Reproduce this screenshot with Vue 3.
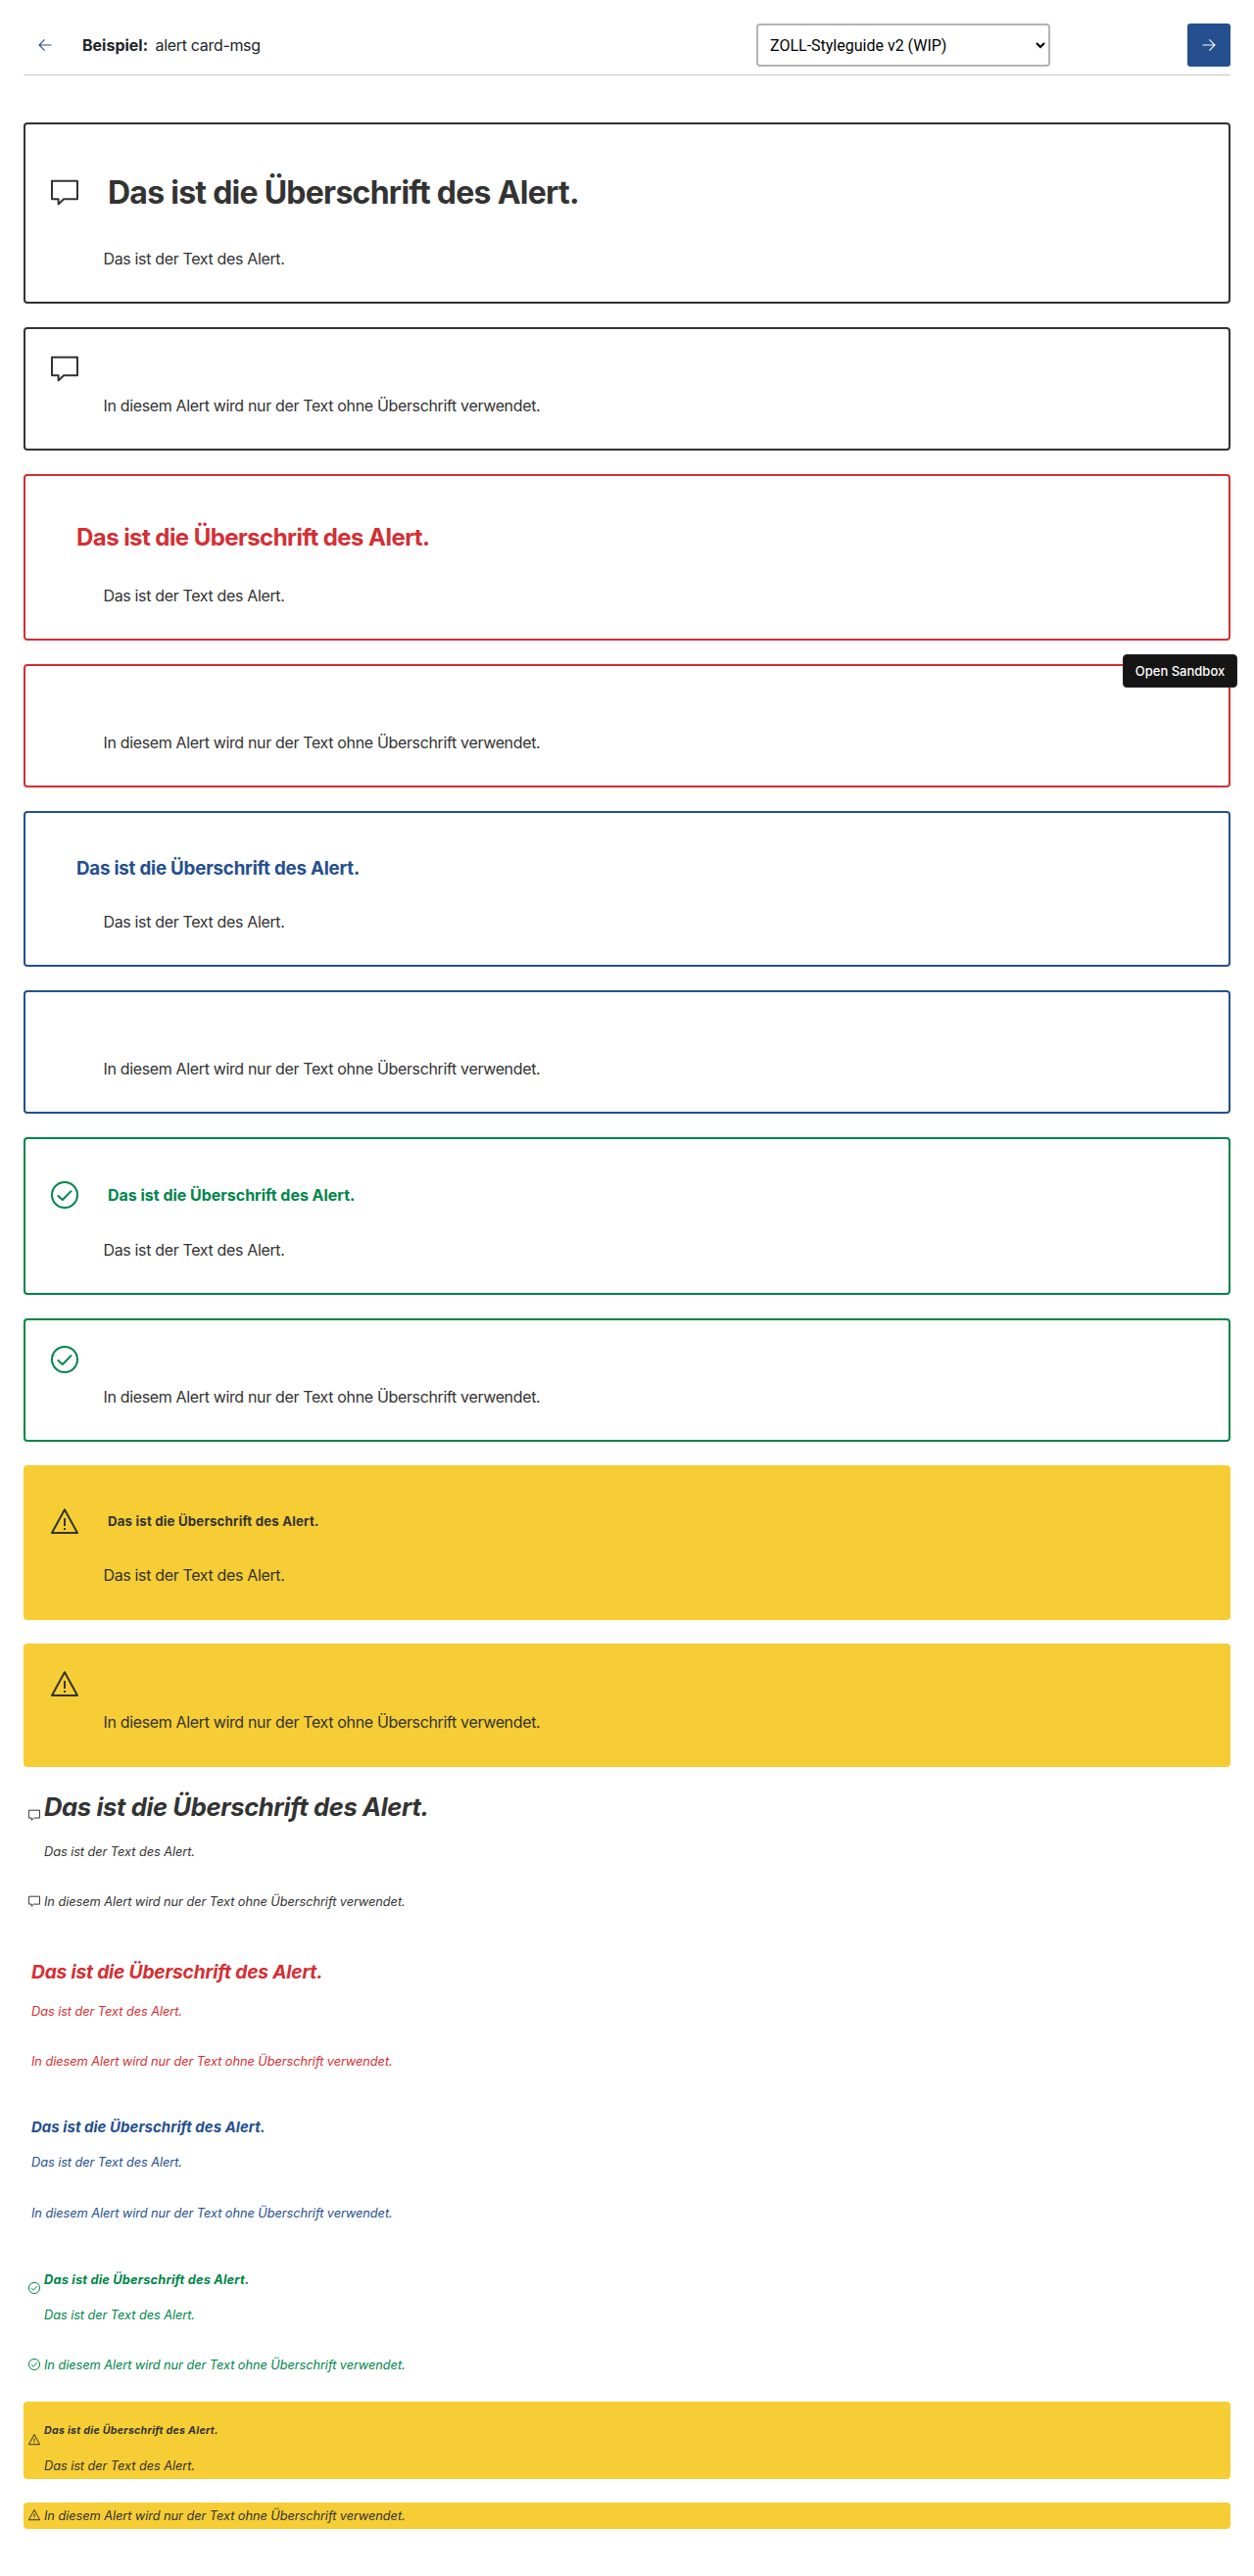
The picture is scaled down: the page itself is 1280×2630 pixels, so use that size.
<script setup>
import { h } from 'vue'

const titleText = 'Das ist die Überschrift des Alert.'
const bodyText = 'Das ist der Text des Alert.'
const soloText = 'In diesem Alert wird nur der Text ohne Überschrift verwendet.'

const shapes = {
  msg: [
    ['path', { d: 'M1 2.8H27V21.2H13.1L7.6 26.4V21.2H1Z' }],
  ],
  success: [
    ['circle', { cx: 14, cy: 14, r: 13 }],
    ['path', { d: 'M6.8 14.4L11.8 19L21 9.6' }],
  ],
  warning: [
    ['path', { d: 'M14 1.2L27 25H1Z' }],
    ['path', { d: 'M14 10V18M14 20V22' }],
  ],
}

const AlertIcon = (props) =>
  h(
    'svg',
    {
      viewBox: '0 0 28 28',
      fill: 'none',
      stroke: 'currentColor',
      'stroke-width': 2,
      'stroke-linejoin': 'round',
      'aria-hidden': 'true',
    },
    shapes[props.name].map(([tag, attrs]) => h(tag, attrs)),
  )
AlertIcon.props = ['name']

const alerts = [
  { kind: 'default', icon: 'msg', tag: 'h1' },
  { kind: 'danger', icon: null, tag: 'h2' },
  { kind: 'info', icon: null, tag: 'h3' },
  { kind: 'success', icon: 'success', tag: 'h4' },
  { kind: 'warning', icon: 'warning', tag: 'h5' },
].flatMap((a) => [{ ...a, titled: true }, { ...a, titled: false }])
</script>

<template>
  <div class="page">
    <header class="bar">
      <button class="nav back" aria-label="Zurück">
        <svg viewBox="0 0 14 14"><path d="M13.5 7H1.2M6.6 1.4L1 7L6.6 12.6" /></svg>
      </button>
      <p class="example"><strong>Beispiel:</strong><span>alert card-msg</span></p>
      <select class="guide" aria-label="Styleguide">
        <option>ZOLL-Styleguide v2 (WIP)</option>
      </select>
      <button class="nav next" aria-label="Weiter">
        <svg viewBox="0 0 14 14"><path d="M.5 7H12.8M7.4 1.4L13 7L7.4 12.6" /></svg>
      </button>
    </header>

    <main>
      <section class="cards">
        <article v-for="(a, i) in alerts" :key="i" class="card" :class="a.kind">
          <div class="head" :class="a.titled ? a.tag : 'bare'">
            <AlertIcon v-if="a.icon" class="icon" :name="a.icon" />
            <component :is="a.tag" v-if="a.titled" class="title">{{ titleText }}</component>
          </div>
          <p class="text">{{ a.titled ? bodyText : soloText }}</p>
        </article>
      </section>

      <section class="messages">
        <article v-for="(a, i) in alerts" :key="i" class="msg" :class="a.kind">
          <AlertIcon v-if="a.icon" class="mini" :name="a.icon" />
          <div class="content">
            <component :is="a.tag" v-if="a.titled" class="title" :class="a.tag">{{ titleText }}</component>
            <p class="text">{{ a.titled ? bodyText : soloText }}</p>
          </div>
        </article>
      </section>
    </main>

    <button class="sandbox">Open Sandbox</button>
  </div>
</template>

<style>
body {
  margin: 0;
  background: #fff;
}
</style>

<style scoped>
.page {
  position: relative;
  box-sizing: border-box;
  height: 2630px;
  padding: 24px 24px 0;
  overflow: hidden;
  color: #333;
  font: 16px/24px Inter, 'Liberation Sans', sans-serif;
}

p,
h1,
h2,
h3,
h4,
h5 {
  margin: 0;
}

.bar {
  display: flex;
  align-items: flex-start;
  height: 52px;
  border-bottom: 1px solid #c8c8c8;
}

.nav {
  display: flex;
  align-items: center;
  justify-content: center;
  width: 44px;
  height: 44px;
  padding: 0;
  border: 0;
  border-radius: 3px;
  background: none;
  color: #254f8f;
}

.nav svg {
  width: 14px;
  height: 14px;
  fill: none;
  stroke: currentColor;
  stroke-width: 1.1;
}

.next {
  margin-left: auto;
  background: #254f8f;
  color: #fff;
}

.example {
  display: flex;
  gap: 7.5px;
  width: 688px;
  margin-left: 16px;
  color: #212529;
  line-height: 44px;
}

.example span { letter-spacing: -0.32px; }

.guide {
  box-sizing: border-box;
  width: 300px;
  height: 44px;
  padding: 0 8px;
  border: 2px solid #b3b3b3;
  border-radius: 4px;
  background: #fff;
  color: #000;
  font: 16px Roboto, sans-serif;
}

.cards {
  display: flex;
  flex-direction: column;
  gap: 24px;
  margin-top: 48px;
}

.card {
  padding: 26px 26px 32px;
  border: 2px solid currentColor;
  border-radius: 4px;
}

.default { color: #333; }
.danger { color: #d32f34; }
.info { color: #254f8f; }
.success { color: #00854a; }

.warning {
  border-color: #f6cd34;
  background: #f6cd34;
  color: #333;
}

.head {
  display: flex;
  align-items: center;
  height: 28px;
  margin-bottom: 12px;
}

.head.h1 { height: 86px; margin-bottom: 13px; }
.head.h2 { height: 73px; margin-bottom: 11px; }
.head.h3 { height: 61px; }
.head.h4 { height: 62px; margin-bottom: 13px; }
.head.h5 { height: 60px; }

.icon {
  width: 28px;
  height: 28px;
}

.head .title {
  margin-left: 26px;
  font-weight: 700;
}

.icon + .title { margin-left: 30px; }

.h1 .title { padding-top: 2px; font-size: 32px; letter-spacing: -0.74px; }
.h2 .title { font-size: 24px; letter-spacing: -0.56px; }
.h3 .title { font-size: 18.72px; letter-spacing: -0.2px; }
.h4 .title { font-size: 16px; letter-spacing: -0.02px; }
.h5 .title { padding-bottom: 2px; font-size: 13.28px; line-height: 22px; letter-spacing: 0.17px; }

.card .text {
  margin-left: 53.5px;
  color: #333;
  letter-spacing: -0.35px;
}

.messages {
  display: flex;
  flex-direction: column;
  gap: 24px;
  font-size: 12.8px;
  font-style: italic;
}

.msg {
  display: flex;
  align-items: center;
  gap: 4.5px;
  padding: 0 8px;
  border-radius: 4px;
}

.msg:has(.mini) { padding-left: 4.5px; }

.mini {
  flex: none;
  width: 12px;
  height: 12px;
  margin-bottom: 2px;
  stroke-width: 2.3;
}

.msg .title {
  line-height: 30px;
  font-weight: 700;
}

.msg .text {
  line-height: 27px;
  letter-spacing: -0.07px;
}

.title.h1 { padding: 26px 0 17px; font-size: 25.6px; letter-spacing: -0.385px; }
.title.h2 { padding: 19px 0 12px; font-size: 19.2px; letter-spacing: -0.2px; }
.title.h3 { padding: 15px 0 7px; font-size: 14.98px; letter-spacing: 0.045px; }
.title.h4 { padding: 16px 0 7px; font-size: 12.8px; letter-spacing: 0.19px; }
.title.h5 { padding: 15px 0 7px; font-size: 10.62px; letter-spacing: 0.28px; }

.msg.info + .msg.success { margin-top: 1px; }

.sandbox {
  position: absolute;
  top: 668px;
  right: 17px;
  width: 117px;
  height: 34px;
  padding: 0;
  border: 1px solid #252525;
  border-radius: 4px;
  background: #151515;
  color: #fff;
  font: 500 13px Inter, sans-serif;
}

.msg.info:has(.title) { margin-bottom: 1px; }
.msg.info + .msg.success { margin-top: 0; }
</style>
